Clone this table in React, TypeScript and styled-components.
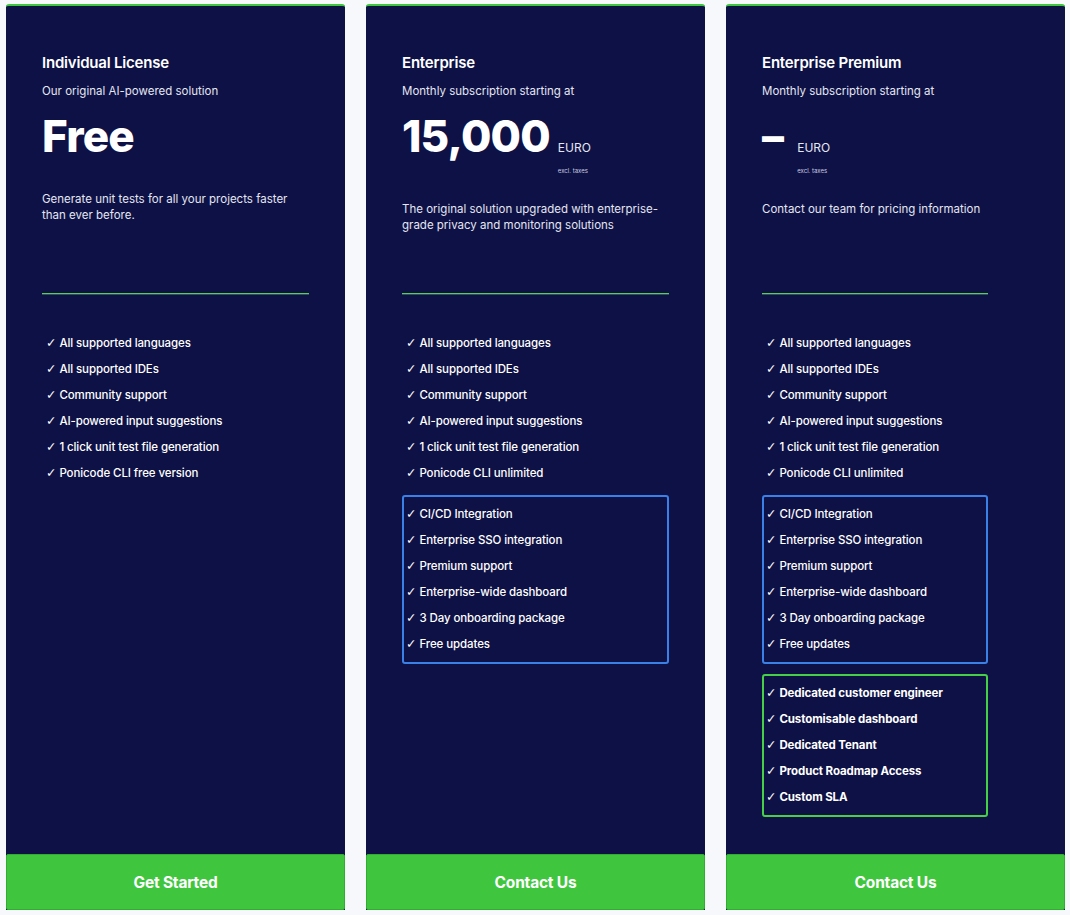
import React from 'react';
import styled, { createGlobalStyle } from 'styled-components';

const GlobalStyle = createGlobalStyle`
    html, body {
        margin: 0;
        padding: 0;
        background: #f7f8fb;
    }

    body {
        font-family: Inter, 'Noto Sans', sans-serif;
        -webkit-font-smoothing: antialiased;
    }
`;

const StyledPage = styled.div`
    display: grid;
    grid-template-columns: repeat(3, 339px);
    column-gap: 21px;
    padding: 4px 5px 5px 6px;
`;

const StyledCard = styled.div`
    height: 906px;
    box-sizing: border-box;
    background: #0e1145;
    border-top: 2px solid #3fc63f;
    border-radius: 3px 3px 0 0;
    display: flex;
    flex-direction: column;
    color: #ffffff;
`;

const StyledBody = styled.div<{ contentWidth: number }>`
    flex: 1;
    padding: 47px 0 0 36px;
    width: ${({ contentWidth }) => contentWidth}px;
`;

const StyledHeader = styled.div`
    height: 240px;
`;

const StyledTitle = styled.h3`
    margin: 0;
    font-size: 15px;
    line-height: 20px;
    font-weight: 600;
    letter-spacing: -0.2px;
`;

const StyledSubtitle = styled.p`
    margin: 10px 0 0;
    font-size: 11.5px;
    line-height: 16px;
    color: #e4e6f2;
`;

const StyledPriceRow = styled.div`
    display: flex;
    align-items: flex-start;
    margin-top: 8px;
    height: 94px;
`;

const StyledAmount = styled.span`
    font-size: 44px;
    line-height: 58px;
    font-weight: 800;
    letter-spacing: -0.8px;
`;

const StyledCurrency = styled.div<{ gap: number }>`
    display: flex;
    flex-direction: column;
    margin-left: ${({ gap }) => gap}px;
    padding-top: 33px;
`;

const StyledEuro = styled.span`
    font-size: 12px;
    line-height: 16px;
    color: #e4e6f2;
`;

const StyledTaxes = styled.span`
    margin-top: 11px;
    font-size: 6px;
    line-height: 8px;
    color: #c9cce0;
`;

const StyledDescription = styled.p<{ offset: number }>`
    margin: ${({ offset }) => offset}px 0 0;
    font-size: 11.5px;
    line-height: 16px;
    color: #e4e6f2;
`;

const StyledDivider = styled.div`
    height: 1px;
    background: #58cc5c;
    box-shadow: 0 1px 0 rgba(88, 204, 92, 0.35);
`;

const StyledList = styled.ul<{ tone?: 'blue' | 'green' }>`
    list-style: none;
    margin: ${({ tone }) => (tone === 'green' ? '10px 0 0' : tone ? '9px 0 0' : '36px 0 0')};
    padding: ${({ tone }) => (tone ? '4px 2px 5px' : '0 4px')};
    border: ${({ tone }) =>
        tone === 'blue' ? '2px solid #3a80e6' : tone === 'green' ? '2px solid #45d048' : 'none'};
    border-radius: 3px;
`;

const StyledItem = styled.li<{ bold?: boolean }>`
    display: flex;
    align-items: center;
    height: 26px;
    font-size: 11.5px;
    font-weight: ${({ bold }) => (bold ? 700 : 500)};
    letter-spacing: -0.1px;
    white-space: nowrap;
`;

const StyledCheck = styled.span`
    font-family: 'DejaVu Sans', sans-serif;
    font-size: 12.5px;
    line-height: 1;
    font-weight: 400;
    margin-right: 3px;
`;

const StyledButton = styled.button`
    height: 56px;
    margin: 0;
    border: 1px solid #2fae2f;
    border-radius: 2px;
    background: #40c63e;
    color: #ffffff;
    font-family: inherit;
    font-size: 15.5px;
    font-weight: 700;
    letter-spacing: -0.2px;
    cursor: pointer;
`;

type Plan = {
    title: string;
    subtitle: string;
    amount: string;
    currency: boolean;
    currencyGap: number;
    description: string;
    descriptionOffset: number;
    contentWidth: number;
    features: string[];
    enterprise?: string[];
    premium?: string[];
    action: string;
};

const baseFeatures = [
    'All supported languages',
    'All supported IDEs',
    'Community support',
    'AI-powered input suggestions',
    '1 click unit test file generation',
];

const enterpriseFeatures = [
    'CI/CD Integration',
    'Enterprise SSO integration',
    'Premium support',
    'Enterprise-wide dashboard',
    '3 Day onboarding package',
    'Free updates',
];

const plans: Plan[] = [
    {
        title: 'Individual License',
        subtitle: 'Our original AI-powered solution',
        amount: 'Free',
        currency: false,
        currencyGap: 8,
        description: 'Generate unit tests for all your projects faster than ever before.',
        descriptionOffset: -10,
        contentWidth: 267,
        features: [...baseFeatures, 'Ponicode CLI free version'],
        action: 'Get Started',
    },
    {
        title: 'Enterprise',
        subtitle: 'Monthly subscription starting at',
        amount: '15,000',
        currency: true,
        currencyGap: 8,
        description: 'The original solution upgraded with enterprise-grade privacy and monitoring solutions',
        descriptionOffset: 0,
        contentWidth: 267,
        features: [...baseFeatures, 'Ponicode CLI unlimited'],
        enterprise: enterpriseFeatures,
        action: 'Contact Us',
    },
    {
        title: 'Enterprise Premium',
        subtitle: 'Monthly subscription starting at',
        amount: '–',
        currency: true,
        currencyGap: 14,
        description: 'Contact our team for pricing information',
        descriptionOffset: 0,
        contentWidth: 226,
        features: [...baseFeatures, 'Ponicode CLI unlimited'],
        enterprise: enterpriseFeatures,
        premium: [
            'Dedicated customer engineer',
            'Customisable dashboard',
            'Dedicated Tenant',
            'Product Roadmap Access',
            'Custom SLA',
        ],
        action: 'Contact Us',
    },
];

const Feature = ({ text, bold }: { text: string; bold?: boolean }) => (
    <StyledItem bold={bold}>
        <StyledCheck>✓</StyledCheck>
        {text}
    </StyledItem>
);

const PlanCard = ({ plan }: { plan: Plan }) => (
    <StyledCard>
        <StyledBody contentWidth={plan.contentWidth}>
            <StyledHeader>
                <StyledTitle>{plan.title}</StyledTitle>
                <StyledSubtitle>{plan.subtitle}</StyledSubtitle>
                <StyledPriceRow>
                    <StyledAmount>{plan.amount}</StyledAmount>
                    {plan.currency && (
                        <StyledCurrency gap={plan.currencyGap}>
                            <StyledEuro>EURO</StyledEuro>
                            <StyledTaxes>excl. taxes</StyledTaxes>
                        </StyledCurrency>
                    )}
                </StyledPriceRow>
                <StyledDescription offset={plan.descriptionOffset}>{plan.description}</StyledDescription>
            </StyledHeader>
            <StyledDivider />
            <StyledList>
                {plan.features.map((feature) => (
                    <Feature key={feature} text={feature} />
                ))}
            </StyledList>
            {plan.enterprise && (
                <StyledList tone="blue">
                    {plan.enterprise.map((feature) => (
                        <Feature key={feature} text={feature} />
                    ))}
                </StyledList>
            )}
            {plan.premium && (
                <StyledList tone="green">
                    {plan.premium.map((feature) => (
                        <Feature key={feature} text={feature} bold />
                    ))}
                </StyledList>
            )}
        </StyledBody>
        <StyledButton>{plan.action}</StyledButton>
    </StyledCard>
);

export default function App() {
    return (
        <>
            <GlobalStyle />
            <StyledPage>
                {plans.map((plan) => (
                    <PlanCard key={plan.title} plan={plan} />
                ))}
            </StyledPage>
        </>
    );
}
